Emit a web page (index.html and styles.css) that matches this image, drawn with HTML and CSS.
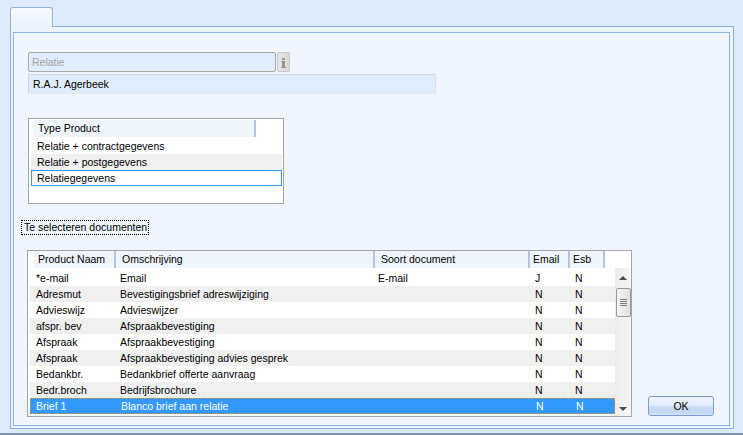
FILE: index.html
```html
<!DOCTYPE html>
<html>
<head>
<meta charset="utf-8">
<link rel="stylesheet" href="styles.css">
</head>
<body>
<div class="tabstrip"><div class="tab"></div></div>
<div class="panel">
  <div class="inner">
    <div class="rel-row">
      <div class="field field-disabled">Relatie</div>
      <div class="info-btn">
        <svg width="13" height="20" viewBox="0 0 13 20">
          <rect x="5" y="6" width="3" height="2" fill="#a09a8c"/>
          <rect x="5" y="9" width="3" height="7" fill="#9a9484"/>
          <rect x="4" y="9" width="1" height="1" fill="#a09a8c"/>
          <rect x="4" y="15" width="5" height="1" fill="#9a9484"/>
        </svg>
      </div>
    </div>
    <div class="field field-name">R.A.J. Agerbeek</div>

    <div class="type-box">
      <div class="type-head"><div class="th type-th">Type Product</div></div>
      <div class="type-row">Relatie + contractgegevens</div>
      <div class="type-row alt">Relatie + postgegevens</div>
      <div class="type-row focus">Relatiegegevens</div>
    </div>

    <div class="label">Te selecteren documenten</div>

    <div class="doc-area">
      <div class="doc-list">
        <div class="doc-head">
          <div class="th c1">Product Naam</div>
          <div class="th c2">Omschrijving</div>
          <div class="th c3">Soort document</div>
          <div class="th c4">Email</div>
          <div class="th c5">Esb</div>
        </div>
        <div class="doc-body">
          <div class="rows">
            <div class="row"><span class="d1">*e-mail</span><span class="d2">Email</span><span class="d3">E-mail</span><span class="d4">J</span><span class="d5">N</span></div>
            <div class="row alt"><span class="d1">Adresmut</span><span class="d2">Bevestigingsbrief adreswijziging</span><span class="d3"></span><span class="d4">N</span><span class="d5">N</span></div>
            <div class="row"><span class="d1">Advieswijz</span><span class="d2">Advieswijzer</span><span class="d3"></span><span class="d4">N</span><span class="d5">N</span></div>
            <div class="row alt"><span class="d1">afspr. bev</span><span class="d2">Afspraakbevestiging</span><span class="d3"></span><span class="d4">N</span><span class="d5">N</span></div>
            <div class="row"><span class="d1">Afspraak</span><span class="d2">Afspraakbevestiging</span><span class="d3"></span><span class="d4">N</span><span class="d5">N</span></div>
            <div class="row alt"><span class="d1">Afspraak</span><span class="d2">Afspraakbevestiging advies gesprek</span><span class="d3"></span><span class="d4">N</span><span class="d5">N</span></div>
            <div class="row"><span class="d1">Bedankbr.</span><span class="d2">Bedankbrief offerte aanvraag</span><span class="d3"></span><span class="d4">N</span><span class="d5">N</span></div>
            <div class="row alt"><span class="d1">Bedr.broch</span><span class="d2">Bedrijfsbrochure</span><span class="d3"></span><span class="d4">N</span><span class="d5">N</span></div>
            <div class="row sel"><span class="d1">Brief 1</span><span class="d2">Blanco brief aan relatie</span><span class="d3"></span><span class="d4">N</span><span class="d5">N</span></div>
          </div>
          <div class="scrollbar">
            <div class="arrow up"></div>
            <div class="thumb"><span></span><span></span><span></span><span></span></div>
            <div class="track"></div>
            <div class="arrow down"></div>
          </div>
        </div>
      </div>
      <div class="ok-btn">OK</div>
    </div>
  </div>
</div>
<div class="bottom-line"></div>
</body>
</html>
```

FILE: styles.css
```css
* { box-sizing: border-box; }
html, body { margin: 0; padding: 0; }
body {
  width: 743px;
  height: 435px;
  overflow: hidden;
  background: #dfeafb;
  font-family: "Liberation Sans", Arial, sans-serif;
  font-size: 10.5px;
  color: #000;
}
.tabstrip {
  height: 26px;
  padding: 7px 0 0 10px;
}
.tab {
  position: relative;
  z-index: 2;
  width: 43px;
  height: 20px;
  border: 1px solid #93b4e0;
  border-bottom: none;
  border-radius: 3px 3px 0 0;
  background: linear-gradient(#f7faff, #eaf2fd);
}
.panel {
  margin: 0 9px 0 10px;
  height: 403px;
  border: 1px solid #8db2e3;
  background: #edf4fe;
  padding: 5px 3px 2px 2px;
}
.inner {
  height: 394px;
  border: 1px solid #8db2e3;
  background: #f1f6fe;
  padding: 19px 0 0 14px;
}
.rel-row {
  display: flex;
  gap: 1px;
  height: 20px;
}
.field {
  height: 20px;
  line-height: 18px;
  padding-left: 3px;
  background: #e1edfd;
  white-space: nowrap;
}
.field-disabled {
  width: 248px;
  border: 1px solid #a9a9a9;
  border-radius: 2px;
  color: #a3a3a3;
}
.info-btn {
  width: 13px;
  height: 20px;
  border: 1px solid #c9c9c9;
  border-radius: 2px;
  background: linear-gradient(90deg, #e6e6e6, #d8d8d8);
  display: flex;
}
.info-btn svg { display: block; margin: -1px; }
.field-name {
  margin-top: 2px;
  width: 408px;
  border: 1px solid #cdd5df;
  border-right-color: #d9e0ea;
  border-bottom-color: #e4eaf2;
  padding-left: 4px;
}
.type-box {
  margin-top: 24px;
  width: 256px;
  height: 86px;
  border: 1px solid #a5a5a5;
  background: #fff;
  padding: 1px 1px 0 2px;
}
.type-head {
  height: 18px;
  padding-left: 2px;
  display: flex;
}
.th {
  height: 17px;
  line-height: 17px;
  background: #f0f5fc;
  border-right: 2px solid #adc6ea;
  white-space: nowrap;
}
.type-th { width: 223px; padding-left: 5px; }
.type-row {
  height: 16px;
  line-height: 16px;
  padding-left: 6px;
  white-space: nowrap;
}
.type-row.alt { background: #f0f0f0; }
.type-row.focus {
  border: 1px solid #3399ff;
  line-height: 14px;
  padding-left: 5px;
}
.label {
  margin: 16px 0 0 -7px;
  display: inline-block;
  height: 15px;
  line-height: 13px;
  border: 1px dotted #000;
  padding: 0 1px 0 2px;
}
.doc-area {
  margin-top: 15px;
  margin-left: -1px;
  display: flex;
  align-items: flex-end;
}
.doc-list {
  width: 605px;
  height: 167px;
  border: 1px solid #a5a5a5;
  background: #fff;
}
.doc-head {
  display: flex;
  padding: 0 0 0 6px;
  height: 17px;
}
.c1 { width: 82px; padding-left: 4px; }
.c2 { width: 259px; padding-left: 6px; }
.c3 { width: 155px; padding-left: 6px; }
.c4 { width: 40px; padding-left: 3px; }
.c5 { width: 35px; padding-left: 3px; }
.doc-body {
  display: flex;
  padding-left: 2px;
}
.rows {
  width: 585px;
  padding-top: 2px;
}
.row {
  display: grid;
  grid-template-columns: 85px 258px 155px 41px 36px;
  height: 16px;
  line-height: 16px;
  white-space: nowrap;
}
.row.alt { background: #f0f0f0; }
.row.sel {
  background: #3399ff;
  color: #fff;
  border: 1px dotted #e8903a;
  line-height: 14px;
}
.d1 { padding-left: 6px; }
.d2 { padding-left: 5px; }
.d3 { padding-left: 5px; }
.d4 { padding-left: 7px; }
.d5 { padding-left: 6px; }
.row.sel .d1 { padding-left: 5px; }
.scrollbar {
  width: 16px;
  height: 148px;
  background: linear-gradient(90deg, #ececec, #f6f6f6);
  display: flex;
  flex-direction: column;
  align-items: center;
}
.arrow {
  width: 0;
  height: 0;
  border-left: 4px solid transparent;
  border-right: 4px solid transparent;
}
.arrow.up {
  margin-top: 8px;
  border-bottom: 4px solid #4a4a4a;
}
.arrow.down {
  margin-bottom: 5px;
  border-top: 4px solid #4a4a4a;
}
.thumb {
  margin-top: 8px;
  width: 15px;
  height: 29px;
  border: 1px solid #9a9a9a;
  border-radius: 2px;
  background: linear-gradient(90deg, #f4f4f4, #e2e2e2);
  display: flex;
  flex-direction: column;
  align-items: center;
  justify-content: center;
  gap: 1px;
}
.thumb span {
  width: 7px;
  height: 1px;
  background: #7c7c7c;
}
.track { flex: 1; }
.ok-btn {
  margin: 0 0 1px 16px;
  width: 66px;
  height: 20px;
  border: 1px solid #7c9dd4;
  border-radius: 3px;
  background: linear-gradient(#eef3fc 0%, #e3ecfa 45%, #cddcf3 55%, #c4d6f1 85%, #d8e4f7 100%);
  text-align: center;
  line-height: 18px;
}
.bottom-line {
  margin-top: 4px;
  height: 2px;
  background: #7f97bb;
}
```
